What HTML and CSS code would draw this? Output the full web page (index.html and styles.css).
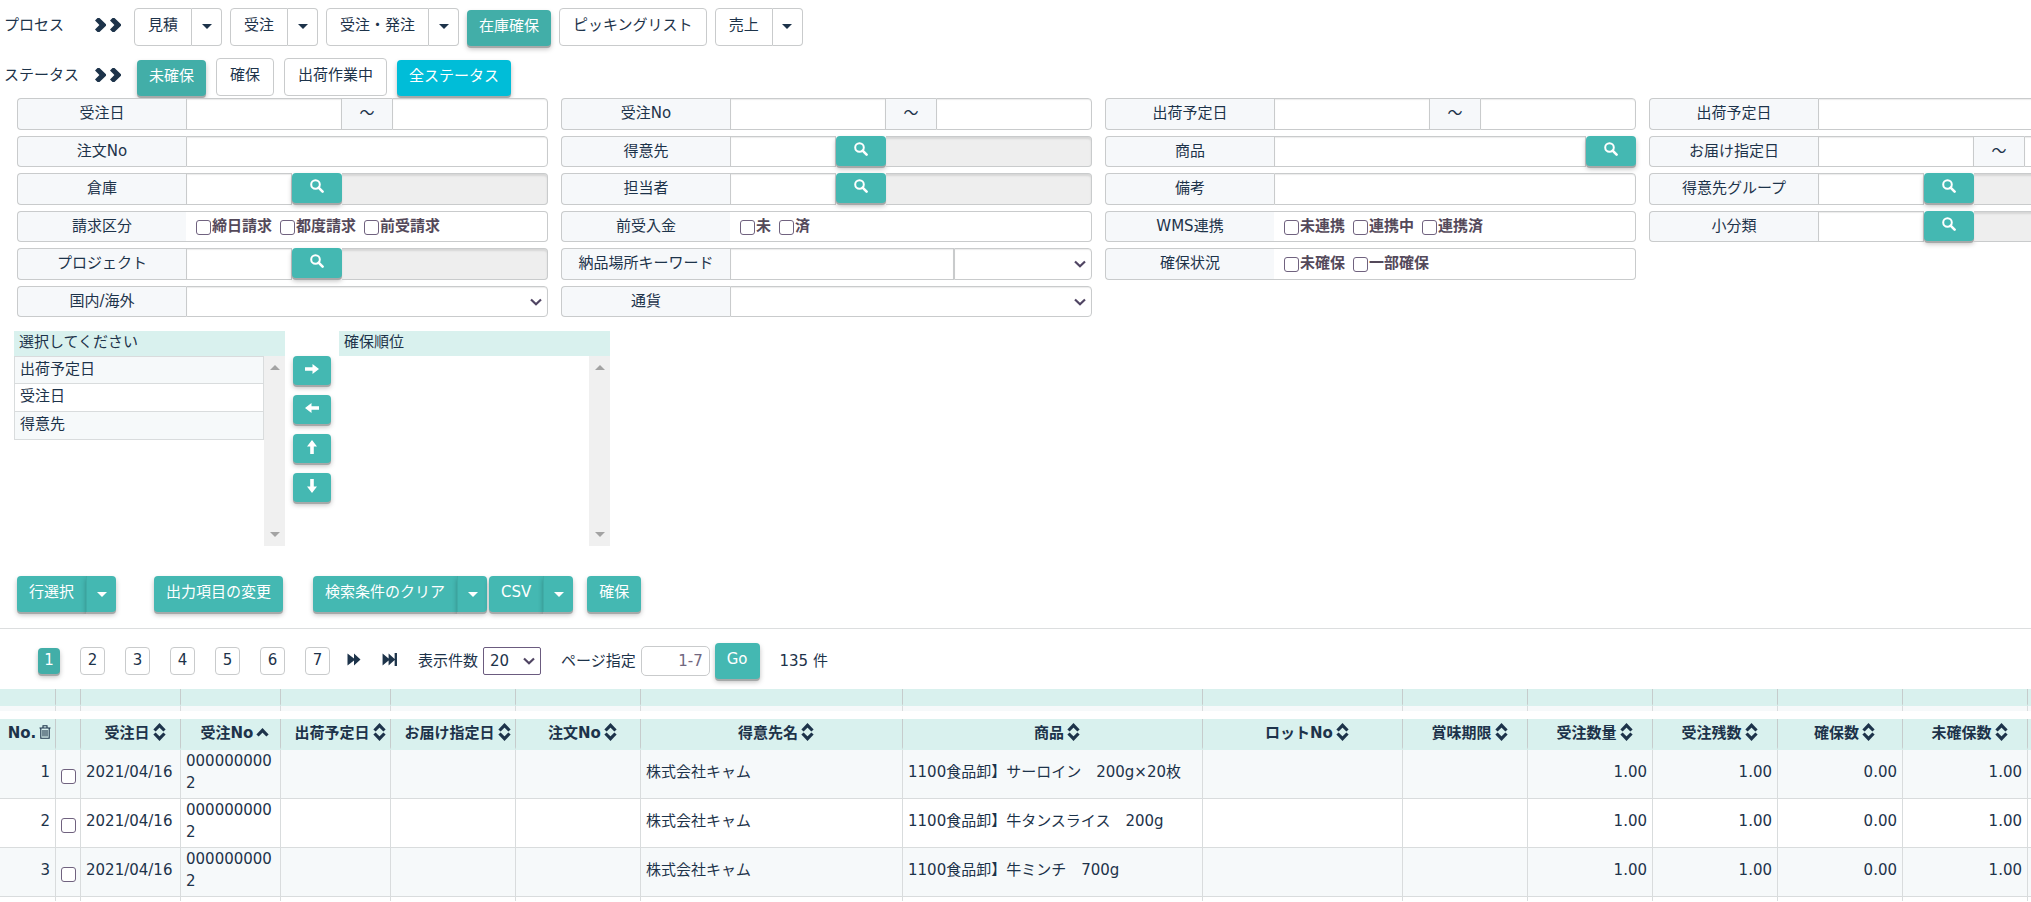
FILE: index.html
```html
<!DOCTYPE html>
<html lang="ja">
<head>
<meta charset="utf-8">
<title>在庫確保</title>
<link rel="stylesheet" href="styles.css">
</head>
<body>
<svg class="defs" aria-hidden="true">
  <symbol id="chev" viewBox="0 0 11 14"><path d="M0 2.500 2.500 0H4.500L11 6.200v1.600L4.500 14H2.500L0 11.500 4.400 7z"/></symbol>
  <symbol id="caret" viewBox="0 0 10 5"><path d="M0 0h10L5 5z"/></symbol>
  <symbol id="search" viewBox="0 0 14 14"><circle cx="5.500" cy="5.500" r="4.300" fill="none" stroke="currentColor" stroke-width="2"/><path d="M8.600 8.600 12.600 12.600" stroke="currentColor" stroke-width="2.600" stroke-linecap="round"/></symbol>
  <symbol id="arrow" viewBox="0 0 14 12"><path d="M0 4.200h7.500V1L14 6l-6.500 5V7.800H0z"/></symbol>
  <symbol id="sort" viewBox="0 0 12 18"><path d="M1 7.500 6 2.400 11 7.500M1 10.500 6 15.600 11 10.500" fill="none" stroke="currentColor" stroke-width="3.200"/></symbol>
  <symbol id="asc" viewBox="0 0 12 18"><path d="M1 12.500 6 7.400 11 12.500" fill="none" stroke="currentColor" stroke-width="3.200"/></symbol>
  <symbol id="trash" viewBox="0 0 12 14"><path d="M.5 3h11M4 2.800V.8h4v2M1.800 3.200v10h8.400v-10M4 5v6.500M6 5v6.500M8 5v6.500" fill="none" stroke="currentColor" stroke-width="1.100"/></symbol>
  <symbol id="forward" viewBox="0 0 14 14"><path d="M0 .5 7 6V.5L14 7 7 13.500V8L0 13.500z"/></symbol>
  <symbol id="last" viewBox="0 0 16 14"><path d="M0 .5 6.500 6V.5L13 6.500V0h2.500v14H13V7.500L6.500 13.500V8L0 13.500z"/></symbol>
</svg>

<header class="steps">
  <div class="step-row">
    <span class="step-name">プロセス</span>
    <span class="chevs"><svg><use href="#chev"/></svg><svg><use href="#chev"/></svg></span>
    <div class="step-buttons">
      <span class="split"><button class="btn">見積</button><button class="btn more" aria-label="見積メニュー"><svg><use href="#caret"/></svg></button></span>
      <span class="split"><button class="btn">受注</button><button class="btn more" aria-label="受注メニュー"><svg><use href="#caret"/></svg></button></span>
      <span class="split"><button class="btn">受注・発注</button><button class="btn more" aria-label="受注・発注メニュー"><svg><use href="#caret"/></svg></button></span>
      <button class="btn solid active">在庫確保</button>
      <button class="btn">ピッキングリスト</button>
      <span class="split"><button class="btn">売上</button><button class="btn more" aria-label="売上メニュー"><svg><use href="#caret"/></svg></button></span>
    </div>
  </div>
  <div class="step-row status">
    <span class="step-name">ステータス</span>
    <span class="chevs"><svg><use href="#chev"/></svg><svg><use href="#chev"/></svg></span>
    <div class="step-buttons">
      <button class="btn solid active">未確保</button>
      <button class="btn">確保</button>
      <button class="btn">出荷作業中</button>
      <button class="btn solid cyan">全ステータス</button>
    </div>
  </div>
</header>

<form class="filters">
  <div class="filter-col">
    <div class="field"><label for="a1">受注日</label><input id="a1"><span class="tilde">～</span><input class="end" aria-label="受注日 終了"></div>
    <div class="field"><label for="a2">注文No</label><input id="a2" class="end"></div>
    <div class="field"><label for="a3">倉庫</label><input id="a3" class="code"><button type="button" class="find" aria-label="倉庫検索"><svg><use href="#search"/></svg></button><input class="end" disabled aria-label="倉庫名"></div>
    <div class="field"><span class="label">請求区分</span><div class="checks"><label><input type="checkbox">締日請求</label><label><input type="checkbox">都度請求</label><label><input type="checkbox">前受請求</label></div></div>
    <div class="field"><label for="a5">プロジェクト</label><input id="a5" class="code"><button type="button" class="find" aria-label="プロジェクト検索"><svg><use href="#search"/></svg></button><input class="end" disabled aria-label="プロジェクト名"></div>
    <div class="field"><label for="a6">国内/海外</label><select id="a6" class="end"><option></option></select></div>
  </div>
  <div class="filter-col">
    <div class="field"><label for="b1">受注No</label><input id="b1"><span class="tilde">～</span><input class="end" aria-label="受注No 終了"></div>
    <div class="field"><label for="b2">得意先</label><input id="b2" class="code"><button type="button" class="find" aria-label="得意先検索"><svg><use href="#search"/></svg></button><input class="end" disabled aria-label="得意先名"></div>
    <div class="field"><label for="b3">担当者</label><input id="b3" class="code"><button type="button" class="find" aria-label="担当者検索"><svg><use href="#search"/></svg></button><input class="end" disabled aria-label="担当者名"></div>
    <div class="field"><span class="label">前受入金</span><div class="checks"><label><input type="checkbox">未</label><label><input type="checkbox">済</label></div></div>
    <div class="field"><label for="b5">納品場所キーワード</label><input id="b5"><select class="end short" aria-label="納品場所"><option></option></select></div>
    <div class="field"><label for="b6">通貨</label><select id="b6" class="end"><option></option></select></div>
  </div>
  <div class="filter-col">
    <div class="field"><label for="c1">出荷予定日</label><input id="c1"><span class="tilde">～</span><input class="end" aria-label="出荷予定日 終了"></div>
    <div class="field"><label for="c2">商品</label><input id="c2"><button type="button" class="find" aria-label="商品検索"><svg><use href="#search"/></svg></button></div>
    <div class="field"><label for="c3">備考</label><input id="c3" class="end"></div>
    <div class="field"><span class="label">WMS連携</span><div class="checks"><label><input type="checkbox">未連携</label><label><input type="checkbox">連携中</label><label><input type="checkbox">連携済</label></div></div>
    <div class="field"><span class="label">確保状況</span><div class="checks"><label><input type="checkbox">未確保</label><label><input type="checkbox">一部確保</label></div></div>
  </div>
  <div class="filter-col">
    <div class="field"><label for="d1">出荷予定日</label><input id="d1" class="end"></div>
    <div class="field"><label for="d2">お届け指定日</label><input id="d2"><span class="tilde">～</span><input class="end" aria-label="お届け指定日 終了"></div>
    <div class="field"><label for="d3">得意先グループ</label><input id="d3" class="code"><button type="button" class="find" aria-label="得意先グループ検索"><svg><use href="#search"/></svg></button><input class="end" disabled aria-label="得意先グループ名"></div>
    <div class="field"><label for="d4">小分類</label><input id="d4" class="code"><button type="button" class="find" aria-label="小分類検索"><svg><use href="#search"/></svg></button><input class="end" disabled aria-label="小分類名"></div>
  </div>
</form>

<section class="transfer">
  <div class="panel">
    <h2>選択してください</h2>
    <div class="panel-body">
      <ul><li>出荷予定日</li><li>受注日</li><li>得意先</li></ul>
      <div class="track"><svg class="up"><use href="#caret"/></svg><svg><use href="#caret"/></svg></div>
    </div>
  </div>
  <div class="moves">
    <button class="move" aria-label="追加"><svg><use href="#arrow"/></svg></button>
    <button class="move left" aria-label="削除"><svg><use href="#arrow"/></svg></button>
    <button class="move above" aria-label="上へ"><svg><use href="#arrow"/></svg></button>
    <button class="move below" aria-label="下へ"><svg><use href="#arrow"/></svg></button>
  </div>
  <div class="panel">
    <h2>確保順位</h2>
    <div class="panel-body">
      <ul></ul>
      <div class="track"><svg class="up"><use href="#caret"/></svg><svg><use href="#caret"/></svg></div>
    </div>
  </div>
</section>

<div class="actions">
  <span class="split rows"><button class="btn solid">行選択</button><button class="btn solid more" aria-label="行選択メニュー"><svg><use href="#caret"/></svg></button></span>
  <button class="btn solid columns">出力項目の変更</button>
  <span class="split clear"><button class="btn solid">検索条件のクリア</button><button class="btn solid more" aria-label="クリアメニュー"><svg><use href="#caret"/></svg></button></span>
  <span class="split csv"><button class="btn solid">CSV</button><button class="btn solid more" aria-label="CSVメニュー"><svg><use href="#caret"/></svg></button></span>
  <button class="btn solid">確保</button>
</div>

<nav class="pager">
  <div class="pages">
    <button class="page current">1</button><button class="page">2</button><button class="page">3</button><button class="page">4</button><button class="page">5</button><button class="page">6</button><button class="page">7</button>
  </div>
  <div class="jumps">
    <button class="jump" aria-label="次へ"><svg><use href="#forward"/></svg></button>
    <button class="jump" aria-label="最後へ"><svg><use href="#last"/></svg></button>
  </div>
  <div class="pair"><label for="size">表示件数</label><select id="size"><option>20</option></select></div>
  <div class="pair"><label for="goto">ページ指定</label><input id="goto" placeholder="1-7"><button class="btn solid">Go</button></div>
  <span>135 件</span>
</nav>

<table class="orders">
  <colgroup><col class="w-no"><col class="w-check"><col class="w-date"><col class="w-date"><col class="w-ship"><col class="w-num"><col class="w-num"><col class="w-client"><col class="w-item"><col class="w-lot"><col class="w-num"><col class="w-num"><col class="w-num"><col class="w-num"><col class="w-num"><col></colgroup>
  <thead>
    <tr class="band"><td></td><td></td><td></td><td></td><td></td><td></td><td></td><td></td><td></td><td></td><td></td><td></td><td></td><td></td><td></td><td></td></tr>
    <tr class="thin"><td></td><td></td><td></td><td></td><td></td><td></td><td></td><td></td><td></td><td></td><td></td><td></td><td></td><td></td><td></td><td></td></tr>
    <tr class="space"><td colspan="16"></td></tr>
    <tr class="head">
      <th class="no">No.<svg class="trash"><use href="#trash"/></svg></th><th></th>
      <th>受注日<svg><use href="#sort"/></svg></th><th>受注No<svg><use href="#asc"/></svg></th><th>出荷予定日<svg><use href="#sort"/></svg></th><th>お届け指定日<svg><use href="#sort"/></svg></th><th>注文No<svg><use href="#sort"/></svg></th><th>得意先名<svg><use href="#sort"/></svg></th><th>商品<svg><use href="#sort"/></svg></th><th>ロットNo<svg><use href="#sort"/></svg></th><th>賞味期限<svg><use href="#sort"/></svg></th><th>受注数量<svg><use href="#sort"/></svg></th><th>受注残数<svg><use href="#sort"/></svg></th><th>確保数<svg><use href="#sort"/></svg></th><th>未確保数<svg><use href="#sort"/></svg></th><th class="rest"></th>
    </tr>
  </thead>
  <tbody>
    <tr><td class="n">1</td><td class="c"><input type="checkbox" aria-label="1行目"></td><td>2021/04/16</td><td>0000000002</td><td></td><td></td><td></td><td>株式会社キャム</td><td>1100食品卸】サーロイン　200g×20枚</td><td></td><td></td><td class="n">1.00</td><td class="n">1.00</td><td class="n">0.00</td><td class="n">1.00</td><td class="rest"></td></tr>
    <tr><td class="n">2</td><td class="c"><input type="checkbox" aria-label="2行目"></td><td>2021/04/16</td><td>0000000002</td><td></td><td></td><td></td><td>株式会社キャム</td><td>1100食品卸】牛タンスライス　200g</td><td></td><td></td><td class="n">1.00</td><td class="n">1.00</td><td class="n">0.00</td><td class="n">1.00</td><td class="rest"></td></tr>
    <tr><td class="n">3</td><td class="c"><input type="checkbox" aria-label="3行目"></td><td>2021/04/16</td><td>0000000002</td><td></td><td></td><td></td><td>株式会社キャム</td><td>1100食品卸】牛ミンチ　700g</td><td></td><td></td><td class="n">1.00</td><td class="n">1.00</td><td class="n">0.00</td><td class="n">1.00</td><td class="rest"></td></tr>
    <tr class="peek"><td></td><td></td><td></td><td></td><td></td><td></td><td></td><td></td><td></td><td></td><td></td><td></td><td></td><td></td><td></td><td></td></tr>
  </tbody>
</table>
</body>
</html>
```

FILE: styles.css
```css
* { box-sizing: border-box; }
:root {
  --ink: #1d334a;
  --teal: #44b8b2;
  --teal-dark: #42aea8;
  --mint: #d9f1ee;
  --line: #c9cbcc;
  --lift: 0 2px 0 #a6a9a9, 0 3px 5px rgba(0, 0, 0, .25);
}
body, button, input, select {
  font-family: "DejaVu Sans", "Noto Sans CJK JP", sans-serif;
  font-size: 15px;
  line-height: 22px;
  color: var(--ink);
}
body { margin: 0; background: #fff; }
button, input, select { margin: 0; padding: 0; }
svg { fill: currentColor; display: block; flex: none; }
.defs { position: absolute; width: 0; height: 0; }
select {
  appearance: none;
  background: #fff url("data:image/svg+xml,%3Csvg xmlns='http://www.w3.org/2000/svg' width='12' height='8'%3E%3Cpath d='M1 1.500 6 6.300 11 1.500' fill='none' stroke='%23504563' stroke-width='2.200'/%3E%3C/svg%3E") no-repeat right 5px center;
}

.btn {
  height: 38px;
  padding: 0 13px 4px;
  border: 1px solid var(--line);
  border-radius: 4px;
  background: #fff;
  white-space: nowrap;
}
.btn svg { width: 10px; height: 5px; }
.split { display: flex; }
.split .btn:first-child { border-radius: 4px 0 0 4px; }
.split .more {
  width: 30px;
  padding: 0 0 2px;
  border-left: 0;
  border-radius: 0 4px 4px 0;
  display: flex;
  align-items: center;
  justify-content: center;
}
.solid {
  height: 36px;
  padding: 0 12px 5px;
  border: 0;
  background: var(--teal);
  color: #fff;
  box-shadow: var(--lift);
}
.solid.active { background: var(--teal-dark); }
.solid.cyan { background: #00bdd8; }

.steps { padding: 8px 0 0 4px; display: flex; flex-direction: column; gap: 12px; }
.step-row { display: flex; height: 38px; }
.step-name { width: 91px; line-height: 34px; }
.chevs { width: 39px; display: flex; gap: 4px; padding-top: 10px; }
.chevs svg { width: 11px; height: 14px; }
.step-buttons { display: flex; gap: 8px; }
.step-buttons > .solid { margin-top: 2px; }
.status .chevs { width: 42px; }
.status .step-buttons { gap: 10px; }

.filters {
  display: grid;
  grid-template-columns: repeat(4, minmax(531px, 1fr));
  gap: 13px;
  padding: 2px 0 2px 17px;
  overflow: hidden;
}
.filter-col { display: flex; flex-direction: column; gap: 6px; }
.field { display: flex; height: 32px; }
.field:nth-child(even) { height: 31px; }
.field > label, .label {
  flex: 0 0 169px;
  border: 1px solid var(--line);
  border-right: 0;
  border-radius: 4px 0 0 4px;
  background: #f6f8fa;
  text-align: center;
  line-height: 29px;
}
.field > input, .field > select {
  flex: 1 1 0;
  min-width: 0;
  border: 1px solid var(--line);
  border-radius: 0;
  background-color: #fff;
  box-shadow: inset 0 1px 1px rgba(0, 0, 0, .08);
}
.field > .code { flex: 0 0 106px; }
.field > .end { border-radius: 0 4px 4px 0; }
.field > .short { flex: 0 0 138px; }
.field > input:disabled { background: #eee; border-left: 0; box-shadow: inset 0 2px 2px rgba(0, 0, 0, .1); }
.tilde {
  flex: 0 0 50px;
  border: 1px solid var(--line);
  border-width: 1px 0;
  background: #f6f8fa;
  text-align: center;
  line-height: 29px;
}
.find {
  flex: 0 0 50px;
  height: 30px;
  padding-bottom: 4px;
  border: 0;
  border-radius: 4px;
  background: var(--teal);
  color: #fff;
  box-shadow: var(--lift);
  display: flex;
  align-items: center;
  justify-content: center;
}
.find svg { width: 14px; height: 14px; }
.checks {
  flex: 1;
  display: flex;
  gap: 8px;
  padding: 0 10px;
  border: 1px solid var(--line);
  border-left: 0;
  border-radius: 0 4px 4px 0;
  font-weight: bold;
  color: #54495a;
  line-height: 28px;
}
.checks label { display: flex; gap: 1px; }
input[type="checkbox"] {
  appearance: none;
  width: 15px;
  height: 15px;
  border: 1px solid #70627f;
  border-radius: 3px;
  background: #fff;
}
.checks input { margin-top: 8px; }

.transfer { display: flex; gap: 8px; padding: 12px 14px 0; }
.panel { width: 271px; }
.panel h2 {
  margin: 0;
  padding: 0 5px 2px;
  background: var(--mint);
  font-size: 15px;
  font-weight: normal;
  line-height: 23px;
}
.panel-body { display: flex; height: 190px; }
.panel ul { flex: 1; margin: 0; padding: 0; list-style: none; }
.panel li {
  height: 28px;
  padding: 0 5px;
  border: 1px solid #d9dcdd;
  border-top-width: 0;
  line-height: 25px;
}
.panel li:first-child { border-top-width: 1px; }
.panel li:nth-child(odd) { background: #f6f9fa; }
.track {
  width: 21px;
  padding: 9px 0;
  background: #f0f0f0;
  color: #a3a3a3;
  display: flex;
  flex-direction: column;
  justify-content: space-between;
  align-items: center;
}
.track svg { width: 10px; height: 5px; }
.track .up { transform: rotate(180deg); }
.moves { display: flex; flex-direction: column; gap: 10px; padding-top: 25px; }
.move {
  width: 38px;
  height: 29px;
  padding-bottom: 3px;
  border: 0;
  border-radius: 4px;
  background: var(--teal);
  color: #fff;
  box-shadow: var(--lift);
  display: flex;
  align-items: center;
  justify-content: center;
}
.move svg { width: 14px; height: 12px; }
.left svg { transform: rotate(180deg); }
.above svg { transform: rotate(-90deg); }
.below svg { transform: rotate(90deg); }

.actions { display: flex; padding: 30px 17px 16px; border-bottom: 1px solid #dcdedf; }
.actions .more { border-left: 1px solid #3fada7; padding-top: 2px; }
.rows { margin-right: 38px; }
.columns { margin-right: 30px; }
.clear { margin-right: 2px; }
.csv { margin-right: 14px; }

.pager { display: flex; align-items: center; gap: 20px; height: 60px; padding: 4px 0 0 38px; }
.pages { display: flex; align-items: center; gap: 20px; }
.page {
  width: 25px;
  height: 28px;
  padding-bottom: 3px;
  border: 1px solid var(--line);
  border-radius: 4px;
  background: #fff;
}
.current { width: 22px; height: 26px; border: 0; background: var(--teal-dark); color: #fff; box-shadow: var(--lift); }
.jumps { display: flex; gap: 20px; margin-left: -4px; }
.jump { border: 0; background: none; padding-bottom: 4px; }
.jump svg { width: 16px; height: 13px; }
.pair { display: flex; align-items: center; gap: 5px; }
.pair select { width: 58px; height: 28px; padding-left: 6px; border: 1px solid #6b5b7f; border-radius: 2px; }
.pair input { width: 69px; height: 30px; padding: 0 6px; border: 1px solid var(--line); border-radius: 5px; text-align: right; }
.pair input::placeholder { color: #71677f; opacity: 1; }

.orders { width: 100%; table-layout: fixed; border-collapse: separate; border-spacing: 0; }
.w-no { width: 56px; }
.w-check { width: 25px; }
.w-date { width: 100px; }
.w-ship { width: 110px; }
.w-num { width: 125px; }
.w-client { width: 262px; }
.w-item { width: 300px; }
.w-lot { width: 200px; }
.orders td, .orders th { padding: 0; border-right: 1px solid #d9dcdd; }
.orders .band td { height: 17px; background: var(--mint); border-right-color: #c6cccc; border-bottom: 2px solid var(--mint); }
.orders .thin td { height: 5px; background: #f6f9fa; }
.orders .space td { height: 8px; border: 0; }
.orders th {
  height: 31px;
  padding-left: 9px;
  background: var(--mint);
  border-right-color: #c6cccc;
  border-bottom: 3px solid var(--mint);
  white-space: nowrap;
  line-height: 28px;
}
.orders .no { padding-left: 4px; }
.orders th svg { display: inline-block; width: 13px; height: 18px; margin-left: 3px; vertical-align: -3px; }
.orders th .trash { width: 12px; height: 14px; vertical-align: -1px; }
.orders tbody td { height: 49px; padding: 0 5px 4px; border-bottom: 1px solid #d9dcdd; overflow-wrap: anywhere; }
.orders tbody tr:nth-child(odd) td { background: #f6f9fa; }
.orders tbody .n { text-align: right; }
.orders tbody .c { padding: 4px 4px 0 5px; line-height: 0; }
.orders td:last-child, .orders .rest { padding: 0; border-right: 0; }
.orders tbody .rest { padding: 0; }
.orders tbody .peek td { height: 4px; padding: 0; border-bottom: 0; }
```
